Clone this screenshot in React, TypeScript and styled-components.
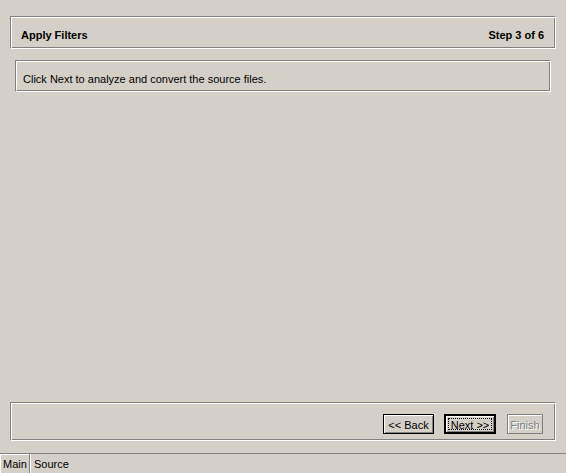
import React from "react";
import styled, { createGlobalStyle } from "styled-components";

const Global = createGlobalStyle`
  html, body { margin: 0; padding: 0; background: #d4d0c8; }
  body { font-family: Tahoma, "Liberation Sans", Arial, sans-serif; font-size: 11px; color: #000; }
`;

const Page = styled.div`
  height: 473px;
  display: flex;
  flex-direction: column;
  background: #d4d0c8;
  overflow: hidden;
`;

const Wizard = styled.div`
  flex: 1;
  display: flex;
  flex-direction: column;
  padding: 16px 10px 0 10px;
`;

const Etched = styled.div`
  box-sizing: border-box;
  border: 1px solid;
  border-color: #808080 #ffffff #ffffff #808080;
  box-shadow: inset 1px 1px 0 #ffffff, inset -1px -1px 0 #808080;
`;

const HeaderBox = styled(Etched)`
  height: 33px;
  display: flex;
  align-items: center;
  justify-content: space-between;
  padding: 5px 11px 0 10px;
  font-weight: bold;
`;

const MessageBox = styled(Etched)`
  height: 32px;
  margin: 11px 5px 0 5px;
  display: flex;
  align-items: center;
  padding: 5px 0 0 7px;
`;

const Spacer = styled.div`
  flex: 1;
`;

const FooterBox = styled(Etched)`
  height: 39px;
  margin-bottom: 12px;
  display: flex;
  justify-content: flex-end;
  align-items: flex-start;
  padding: 11px 12px 0 0;
`;

const Button = styled.button<{ $default?: boolean; $disabled?: boolean; $w: number; $ml: number }>`
  box-sizing: border-box;
  width: ${(p) => p.$w}px;
  height: 20px;
  margin-left: ${(p) => p.$ml}px;
  padding: 1px 0 0 0;
  font-family: inherit;
  font-size: 11px;
  background: #d4d0c8;
  position: relative;
  display: flex;
  align-items: center;
  justify-content: center;
  border: ${(p) => (p.$default ? "2px solid #000" : p.$disabled ? "1px solid #808080" : "1px solid #000")};
  box-shadow: ${(p) => (p.$disabled ? "inset 1px 1px 0 #ffffff" : "inset 1px 1px 0 #ffffff, inset -1px -1px 0 #808080")};
  color: ${(p) => (p.$disabled ? "#808080" : "#000")};
  text-shadow: ${(p) => (p.$disabled ? "1px 1px 0 #ffffff" : "none")};
`;

const Focus = styled.span`
  position: absolute;
  inset: 2px;
  border: 1px dotted #000;
`;

const TabBar = styled.div`
  height: 20px;
  box-sizing: border-box;
  border-top: 1px solid #808080;
  display: flex;
  align-items: stretch;
`;

const Tab = styled.div<{ $active?: boolean }>`
  display: flex;
  align-items: center;
  padding: 1px 3px 0 3px;
  box-shadow: ${(p) => (p.$active ? "inset -1px 0 0 #808080, inset 1px 1px 0 #ffffff" : "none")};
  width: ${(p) => (p.$active ? "31px" : "auto")};
  box-sizing: border-box;
  border-right: ${(p) => (p.$active ? "1px solid #ffffff" : "none")};
`;

export default function App() {
  return (
    <Page>
      <Global />
      <Wizard>
        <HeaderBox>
          <span>Apply Filters</span>
          <span>Step 3 of 6</span>
        </HeaderBox>
        <MessageBox>Click Next to analyze and convert the source files.</MessageBox>
        <Spacer />
        <FooterBox>
          <Button $w={51} $ml={0}>&lt;&lt; Back</Button>
          <Button $w={52} $ml={10} $default>
            <Focus />
            Next &gt;&gt;
          </Button>
          <Button $w={36} $ml={11} $disabled>Finish</Button>
        </FooterBox>
      </Wizard>
      <TabBar>
        <Tab $active>Main</Tab>
        <Tab>Source</Tab>
      </TabBar>
    </Page>
  );
}
